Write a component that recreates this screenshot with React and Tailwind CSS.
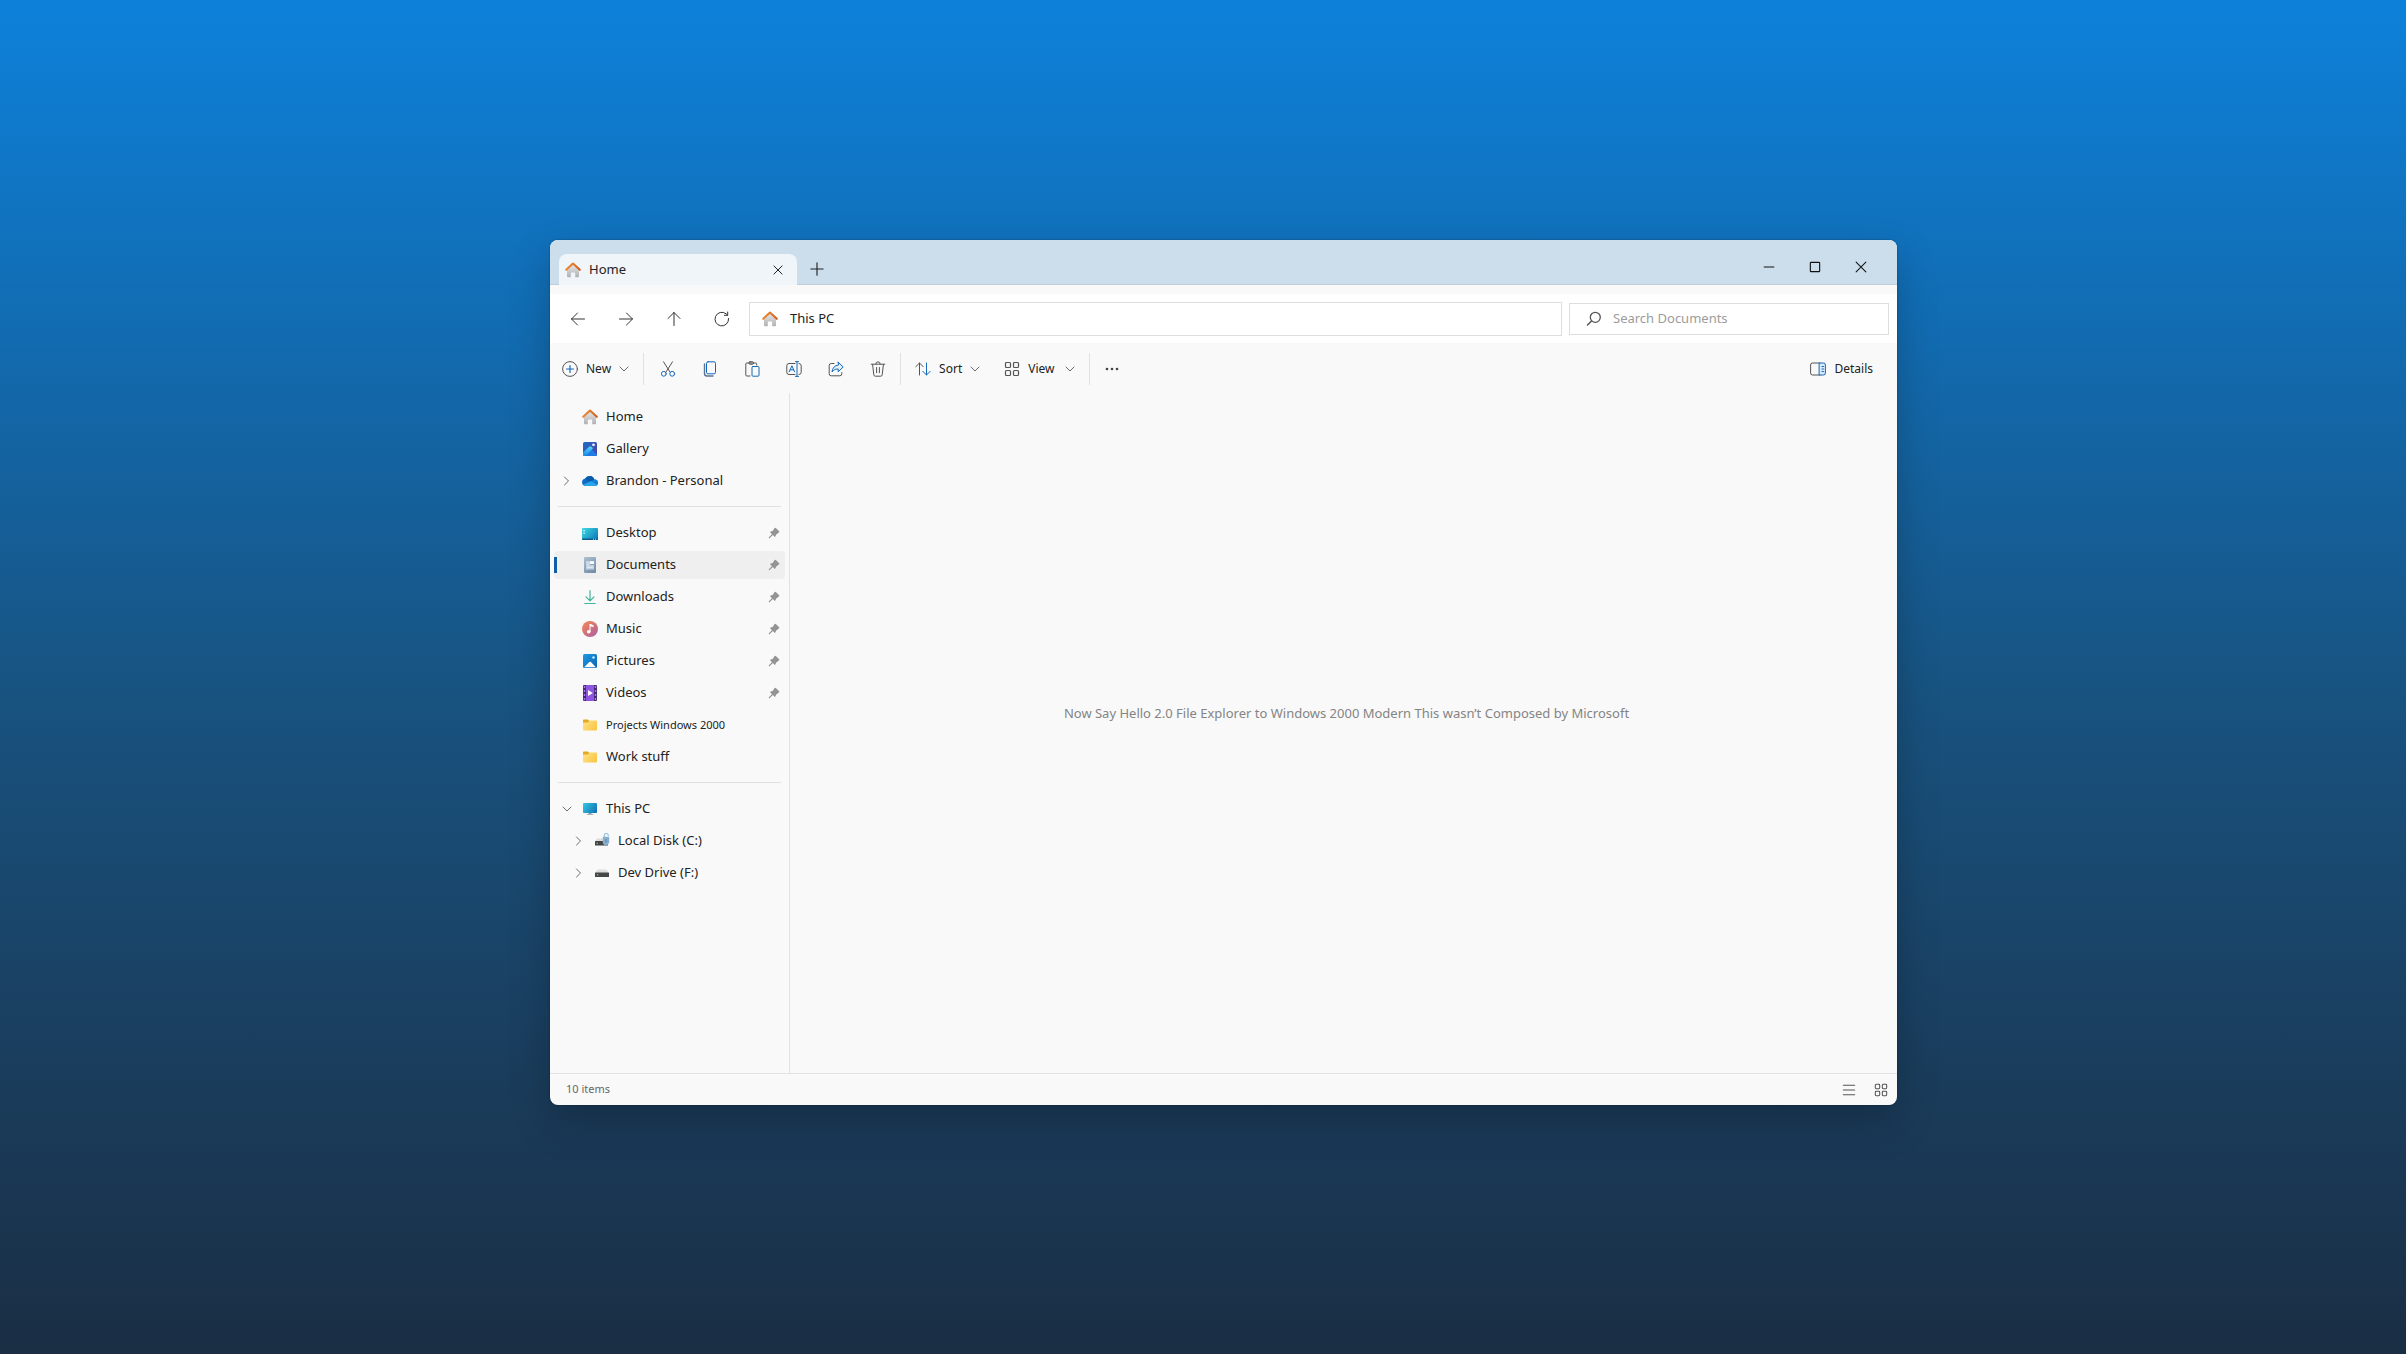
// App.jsx - File Explorer window on a desktop
import React, { useState } from 'react';

const HomeIcon = () => (
  <svg className="w-4 h-4 shrink-0" viewBox="0 0 16 16" fill="none">
    <defs>
      <linearGradient id="homeWall" x1="0" y1="5" x2="0" y2="16" gradientUnits="userSpaceOnUse">
        <stop stopColor="#dcdcdc" />
        <stop offset="1" stopColor="#adadb0" />
      </linearGradient>
      <linearGradient id="homeRoof" x1="0" y1="0" x2="16" y2="8" gradientUnits="userSpaceOnUse">
        <stop stopColor="#f0953a" />
        <stop offset="1" stopColor="#cf5a1c" />
      </linearGradient>
    </defs>
    <path d="M2 7.500 8 2.200 14 7.500v6.800a1 1 0 0 1-1 1h-2.800v-4.100a.8.8 0 0 0-.8-.8H6.600a.8.8 0 0 0-.8.8v4.100H3a1 1 0 0 1-1-1Z" fill="url(#homeWall)" />
    <path d="M1.200 7.800 8 1.500l6.800 6.300" stroke="url(#homeRoof)" strokeWidth="2.100" strokeLinecap="round" strokeLinejoin="round" />
  </svg>
);

const GalleryIcon = () => (
  <svg className="w-4 h-4 shrink-0" viewBox="0 0 16 16">
    <defs>
      <linearGradient id="galBack" x1="1" y1="1" x2="15" y2="12" gradientUnits="userSpaceOnUse">
        <stop stopColor="#1f6cc8" />
        <stop offset="1" stopColor="#4a43a8" />
      </linearGradient>
      <linearGradient id="galHill" x1="8" y1="5" x2="4" y2="15" gradientUnits="userSpaceOnUse">
        <stop stopColor="#55d4fb" />
        <stop offset="1" stopColor="#1b8fe6" />
      </linearGradient>
    </defs>
    <rect x="1" y="1" width="14" height="14" rx="1.500" fill="url(#galBack)" />
    <path d="M3 15 9 7.500 15 13.500A1.500 1.500 0 0 1 13.500 15Z" fill="#1f7ce6" />
    <path d="M1 11.500 7 5.700q1.300-1 2.500 0L11 7.200 3.500 15h-1A1.500 1.500 0 0 1 1 13.500Z" fill="url(#galHill)" />
    <circle cx="11.500" cy="3.800" r="1.400" fill="#e8f4ff" />
  </svg>
);

const CloudIcon = () => (
  <svg className="w-4 h-4 shrink-0" viewBox="0 0 16 16">
    <path d="M4 13A3.800 3.800 0 0 1 .1 9.200 3.700 3.700 0 0 1 3.200 5.500 5 5 0 0 1 12.300 6.400 3.400 3.400 0 0 1 15.900 9.800 3 3 0 0 1 13 13Z" fill="#0f6cc4" />
    <path d="M3.200 5.500A5 5 0 0 1 12.300 6.400L7 8.500Z" fill="#0a5cab" />
    <path d="M12.300 6.400a3.400 3.400 0 0 1 3.600 3.400L9 9Z" fill="#1583d8" />
    <path d="M1.200 11.600 8.800 8.200l6.700 3.300A3 3 0 0 1 13 13H4a3.800 3.800 0 0 1-2.800-1.400Z" fill="#2aa4ea" />
  </svg>
);

const DesktopIcon = () => (
  <svg className="w-4 h-4 shrink-0" viewBox="0 0 16 16">
    <defs>
      <linearGradient id="deskFill" x1="0" y1="3" x2="14" y2="16" gradientUnits="userSpaceOnUse">
        <stop stopColor="#3fdbe2" />
        <stop offset="1" stopColor="#0a78b8" />
      </linearGradient>
    </defs>
    <rect y="3" width="16" height="12" rx="1" fill="url(#deskFill)" />
    <path d="M0 13.500h16V14a1 1 0 0 1-1 1H1a1 1 0 0 1-1-1Z" fill="#0b5c8a" />
    <path d="M1.500 5h1.200v1.200H1.500ZM1.500 7.500h1.200v1.200H1.500ZM11 13.800h1v.8h-1ZM13 13.800h1v.8h-1Z" fill="#fff" />
  </svg>
);

const DocumentsIcon = () => (
  <svg className="w-4 h-4 shrink-0" viewBox="0 0 16 16">
    <defs>
      <linearGradient id="docFill" x1="2" y1="0" x2="14" y2="16" gradientUnits="userSpaceOnUse">
        <stop stopColor="#adc0d1" />
        <stop offset="1" stopColor="#7088a3" />
      </linearGradient>
    </defs>
    <rect x="2" width="12" height="16" rx="1" fill="url(#docFill)" />
    <path d="M4 4h4v4h4v4.500H4Z" fill="#c3d2e1" />
    <path d="M8 4.200h4V7H8Z" fill="#fff" />
    <path d="M5 6h1.500M5 8h1.500M5 10.300h6" stroke="#eef3f8" strokeWidth=".8" />
  </svg>
);

const DownloadsIcon = () => (
  <svg className="w-4 h-4 shrink-0" viewBox="0 0 16 16" fill="none" stroke="#3fb59b" strokeWidth="1.200" strokeLinecap="round" strokeLinejoin="round">
    <path d="M8 1.500v10M4 7.800l4 4 4-4" />
    <path d="M2.800 14.500h10.400" />
  </svg>
);

const MusicIcon = () => (
  <svg className="w-4 h-4 shrink-0" viewBox="0 0 16 16">
    <defs>
      <linearGradient id="musicFill" x1="2" y1="2" x2="14" y2="15" gradientUnits="userSpaceOnUse">
        <stop stopColor="#ee8458" />
        <stop offset="1" stopColor="#b1609f" />
      </linearGradient>
    </defs>
    <circle cx="8" cy="8" r="8" fill="url(#musicFill)" />
    <circle cx="6.700" cy="10.800" r="1.800" fill="#fff" />
    <path d="M7.500 3h1.200l2.800 1.300v2L8.500 5.200v5.800h-1Z" fill="#fff" />
  </svg>
);

const PicturesIcon = () => (
  <svg className="w-4 h-4 shrink-0" viewBox="0 0 16 16">
    <defs>
      <linearGradient id="picFill" x1="1" y1="1" x2="15" y2="15" gradientUnits="userSpaceOnUse">
        <stop stopColor="#1e9be4" />
        <stop offset="1" stopColor="#0a62b5" />
      </linearGradient>
    </defs>
    <rect x="1" y="1" width="14" height="14" rx="1.500" fill="url(#picFill)" />
    <path d="M2.200 14.300 7.300 9.100q.8-.7 1.600 0l5 5.200Z" fill="#fff" />
    <circle cx="11.500" cy="4.500" r="1.200" fill="#d9f1ff" />
  </svg>
);

const VideosIcon = () => (
  <svg className="w-4 h-4 shrink-0" viewBox="0 0 16 16">
    <rect x="1" width="14" height="16" rx="1" fill="#432c73" />
    <rect x="4" width="8" height="16" fill="#9055e0" />
    <path d="M1.800 1h1.400v2H1.800ZM1.800 5h1.400v2H1.800ZM1.800 9h1.400v2H1.800ZM1.800 13h1.400v2H1.800ZM12.800 1h1.400v2h-1.400ZM12.800 5h1.400v2h-1.400ZM12.800 9h1.400v2h-1.400ZM12.800 13h1.400v2h-1.400Z" fill="#a879ea" />
    <path d="M6 5v6l4.800-3Z" fill="#fff" />
  </svg>
);

const FolderIcon = () => (
  <svg className="w-4 h-4 shrink-0" viewBox="0 0 16 16">
    <defs>
      <linearGradient id="folderFill" x1="1" y1="4" x2="15" y2="14" gradientUnits="userSpaceOnUse">
        <stop stopColor="#ffe08a" />
        <stop offset="1" stopColor="#fac43a" />
      </linearGradient>
    </defs>
    <path d="M1 3.200a.8.800 0 0 1 .8-.8h4L7.500 4H14v4H1Z" fill="#e5a820" />
    <path d="M1 5.500h5L7.500 3.600h6.700a.8.800 0 0 1 .8.800v8.200a.8.800 0 0 1-.8.800H1.800a.8.800 0 0 1-.8-.8Z" fill="url(#folderFill)" />
  </svg>
);

const PcIcon = () => (
  <svg className="w-4 h-4 shrink-0" viewBox="0 0 16 16">
    <defs>
      <linearGradient id="pcFill" x1="1" y1="2" x2="15" y2="12" gradientUnits="userSpaceOnUse">
        <stop stopColor="#36cbe2" />
        <stop offset="1" stopColor="#0d6cb4" />
      </linearGradient>
    </defs>
    <path d="M6.500 11.500h3V13.500h-3Z" fill="#8297a8" />
    <path d="M4.800 13h6.400v1H4.800Z" fill="#a4b2bd" />
    <rect x="1" y="2" width="14" height="10" rx=".8" fill="url(#pcFill)" />
  </svg>
);

const LocalDiskIcon = () => (
  <svg className="w-4 h-4 shrink-0" viewBox="0 0 16 16">
    <path d="M3 5.500h7v3H1Z" fill="#dcdcdc" />
    <rect x="1" y="8" width="13" height="4.500" rx=".6" fill="#444" />
    <rect x="2.500" y="9.800" width="1.500" height="1" fill="#6fe08c" />
    <path d="M10.300 4V2.400a2 2 0 0 1 4 0v.8" fill="none" stroke="#7fb2d6" strokeWidth="1" />
    <path d="M8.800 3.800h6.400v6L13.500 12h-3L8.800 10.500Z" fill="#87b0cf" />
    <path d="M11.300 6h1.400v3.500h-1.400Z" fill="#5d8fb5" />
  </svg>
);

const DriveIcon = () => (
  <svg className="w-4 h-4 shrink-0" viewBox="0 0 16 16">
    <path d="M3.500 4.500h9L15 8H1Z" fill="#dedede" />
    <rect x="1" y="7.500" width="14" height="4.500" rx=".6" fill="#454545" />
    <rect x="2.800" y="9.300" width="1.500" height="1" fill="#7be495" />
  </svg>
);

const PinIcon = () => (
  <svg className="w-3 h-3 shrink-0" viewBox="0 0 12 12" fill="#949494" stroke="#949494" strokeLinecap="round" strokeLinejoin="round">
    <path d="M7.300 1.500 10.600 4.700 8.800 6.200 7.700 6.700 6.800 9 3 5.200 5.300 4.400 6 3.300Z" strokeWidth="1.500" />
    <path d="M4.500 7.500 1.300 10.700" strokeWidth="1.200" />
  </svg>
);

const Chevron = ({ down }) => (
  <svg className="w-[10px] h-[10px] shrink-0" viewBox="0 0 10 10" fill="none" stroke="#6a6a6a" strokeLinecap="round" strokeLinejoin="round">
    <path d={down ? 'M1 3l4 4 4-4' : 'M2.500 1l4 4-4 4'} />
  </svg>
);

const Line = ({ children, className = 'w-4 h-4', color = '#555' }) => (
  <svg className={`${className} shrink-0`} viewBox="0 0 16 16" fill="none" stroke={color} strokeLinecap="round" strokeLinejoin="round">
    {children}
  </svg>
);

const GridIcon = ({ className = 'w-4 h-4' }) => (
  <Line className={className}>
    <g strokeWidth="1.200">
      <rect x="1.500" y="1.500" width="5" height="5" rx="1" />
      <rect x="9.500" y="1.500" width="5" height="5" rx="1" />
      <rect x="1.500" y="9.500" width="5" height="5" rx="1" />
      <rect x="9.500" y="9.500" width="5" height="5" rx="1" />
    </g>
  </Line>
);

const BLUE = '#1668b8';

const navButtons = [
  { label: 'Back', icon: <path d="M14.500 8H1.500M7.500 2 1.500 8l6 6" /> },
  { label: 'Forward', icon: <path d="M1.500 8h13M8.500 2l6 6-6 6" /> },
  { label: 'Up', icon: <path d="M8 14.500v-13M2 7.500l6-6 6 6" /> },
  { label: 'Refresh', icon: <path d="M14.600 7.500a6.800 6.800 0 1 1-2.500-4.700L13.500 4M13.700 1v3.300h-3.300" /> },
];

const editButtons = [
  {
    label: 'Cut',
    icon: (
      <>
        <path d="M3.500.8 10 11M12.500.8 6 11" />
        <g stroke={BLUE}>
          <circle cx="3.800" cy="12.800" r="2.400" />
          <circle cx="12.200" cy="12.800" r="2.400" />
        </g>
      </>
    ),
  },
  {
    label: 'Copy',
    icon: (
      <>
        <path d="M2.500 3v9.500a2.500 2.500 0 0 0 2.500 2.500h6" stroke="#5b7592" strokeWidth="1.400" />
        <rect x="4.500" y=".8" width="9" height="12" rx="1.500" stroke={BLUE} />
      </>
    ),
  },
  {
    label: 'Paste',
    icon: (
      <>
        <path d="M6 15H2.800a1 1 0 0 1-1-1V3a1 1 0 0 1 1-1H5M9.500 2h2.200a1 1 0 0 1 1 1v1" />
        <rect x="5" y=".8" width="4.500" height="2.400" rx="1" fill="#a9a39c" />
        <rect x="8" y="5.500" width="7" height="9.700" rx="1" stroke={BLUE} />
      </>
    ),
  },
  {
    label: 'Rename',
    icon: (
      <>
        <path d="M9 2.500H3a2.200 2.200 0 0 0-2.200 2.200v6.600A2.200 2.200 0 0 0 3 13.500h6M13 2.500a2.200 2.200 0 0 1 2.200 2.200v6.600a2.200 2.200 0 0 1-2.200 2.200" />
        <path d="M11 .8v14.400M9.500.6h3M9.500 15.400h3M3.200 10.800 5.900 4.800 8.600 10.800M4.200 8.800h3.400" stroke={BLUE} />
      </>
    ),
  },
  {
    label: 'Share',
    icon: (
      <>
        <path d="M6 2.500H3.200A2 2 0 0 0 1.200 4.500v8.300a2 2 0 0 0 2 2h8.600a2 2 0 0 0 2-2v-1.300" />
        <path d="M10.200 1.200 15.200 6l-5 4.800V8C7.500 7.800 5.500 9 4 11c.3-3.800 2.500-6.600 6.200-7Z" stroke={BLUE} fill="#e3effa" />
      </>
    ),
  },
  {
    label: 'Delete',
    icon: <path d="M1.200 3.200h13.600M5.800 3a2.200 2.200 0 0 1 4.400 0M2.600 3.400l1.200 10.400a1.500 1.500 0 0 0 1.500 1.400h5.400a1.500 1.500 0 0 0 1.500-1.400l1.200-10.400M6.600 6.500v5.200M9.400 6.500v5.200" />,
  },
];

const topItems = [
  { label: 'Home', Icon: HomeIcon },
  { label: 'Gallery', Icon: GalleryIcon },
  { label: 'Brandon - Personal', Icon: CloudIcon, chevron: 'right' },
];

const pinnedItems = [
  { label: 'Desktop', Icon: DesktopIcon, pinned: true },
  { label: 'Documents', Icon: DocumentsIcon, pinned: true },
  { label: 'Downloads', Icon: DownloadsIcon, pinned: true },
  { label: 'Music', Icon: MusicIcon, pinned: true },
  { label: 'Pictures', Icon: PicturesIcon, pinned: true },
  { label: 'Videos', Icon: VideosIcon, pinned: true },
  { label: 'Projects Windows 2000', Icon: FolderIcon, small: true },
  { label: 'Work stuff', Icon: FolderIcon },
];

const driveItems = [
  { label: 'This PC', Icon: PcIcon, chevron: 'down' },
  { label: 'Local Disk (C:)', Icon: LocalDiskIcon, chevron: 'right', nested: true },
  { label: 'Dev Drive (F:)', Icon: DriveIcon, chevron: 'right', nested: true },
];

const SideItem = ({ item, active, onSelect }) => {
  const { label, Icon, chevron, pinned, small, nested } = item;
  return (
    <li>
      <button
        type="button"
        onClick={() => onSelect(label)}
        className={`relative flex items-center w-full h-7 pr-[5px] rounded-sm text-left ${nested ? 'pl-5' : 'pl-2'} ${active ? 'bg-[#efefef]' : ''}`}
      >
        {active && <span className="absolute left-0 top-1.5 w-[3px] h-4 bg-[#0f5ea8]" />}
        <span className="w-5 shrink-0">{chevron && <Chevron down={chevron === 'down'} />}</span>
        <Icon />
        <span className={`ml-2 flex-1 whitespace-nowrap ${small ? 'text-[11px]' : 'text-[13px]'}`}>{label}</span>
        {pinned && <PinIcon />}
      </button>
    </li>
  );
};

const Separator = () => <div className="w-px h-8 bg-[#e2e2e2]" />;

const App = () => {
  const [selected, setSelected] = useState('Documents');

  const renderItems = (items) => (
    <ul className="flex flex-col gap-1">
      {items.map((item) => (
        <SideItem key={item.label} item={item} active={selected === item.label} onSelect={setSelected} />
      ))}
    </ul>
  );

  return (
    <div className="min-h-screen flex flex-col pt-60 pb-[249px] pl-[550px] pr-[509px] bg-[linear-gradient(to_bottom,#0d81da,#126bb0_25%,#18527f_52%,#1a3f60_76%,#1a2e44)] font-['Noto_Sans','Open_Sans',sans-serif] text-[#222]">
      <div className="flex-1 flex flex-col rounded-lg overflow-hidden bg-[#f9f9f9] shadow-[0_16px_40px_rgba(0,0,0,0.22),0_0_2px_rgba(0,0,0,0.4)]">

        {/* TITLE BAR */}
        <header className="flex items-end h-[45px] pl-[9px] pr-[13px] bg-[#ccdeeb] border-b border-[#bccddb]">
          <div className="flex items-center w-[238px] h-[31px] pl-1.5 pr-[11px] -mb-px rounded-t-lg bg-[#f0f5fa]">
            <HomeIcon />
            <span className="ml-2 flex-1 text-[13px]">Home</span>
            <button type="button" aria-label="Close tab" className="w-4 h-4 flex items-center justify-center">
              <Line className="w-[10px] h-[10px]" color="#222"><path d="M1.500 1.500l13 13M14.500 1.500l-13 13" strokeWidth="1.600" /></Line>
            </button>
          </div>
          <button type="button" aria-label="New tab" className="w-10 h-[31px] flex items-center justify-center">
            <Line className="w-[14px] h-[14px]" color="#222"><path d="M8 1v14M1 8h14" strokeWidth="1.300" /></Line>
          </button>
          <div className="flex-1" />
          <div className="flex h-[35px]">
            <button type="button" aria-label="Minimize" className="w-[46px] flex items-center justify-center">
              <Line className="w-3 h-3" color="#111"><path d="M1.500 8h13" strokeWidth="1.400" /></Line>
            </button>
            <button type="button" aria-label="Maximize" className="w-[46px] flex items-center justify-center">
              <Line className="w-3 h-3" color="#111"><rect x="1.800" y="1.800" width="12.400" height="12.400" rx="1" strokeWidth="1.500" /></Line>
            </button>
            <button type="button" aria-label="Close" className="w-[46px] flex items-center justify-center">
              <Line className="w-3 h-3" color="#111"><path d="M1.500 1.500l13 13M14.500 1.500l-13 13" strokeWidth="1.400" /></Line>
            </button>
          </div>
        </header>

        {/* ADDRESS ROW */}
        <div className="flex items-center mt-[9px] h-[49px] pr-2 bg-white">
          <div className="flex items-center gap-4 pl-3">
            {navButtons.map(({ label, icon }) => (
              <button key={label} type="button" aria-label={label} className="w-8 h-8 flex items-center justify-center">
                <Line color="#333">{icon}</Line>
              </button>
            ))}
          </div>
          <button type="button" className="ml-[11px] flex-1 flex items-center h-[34px] pl-3 border border-[#dedede] text-left">
            <HomeIcon />
            <span className="ml-3 text-[13px]">This PC</span>
          </button>
          <div className="ml-[7px] flex items-center w-80 h-8 pl-4 border border-[#dedede]">
            <label htmlFor="search" aria-label="Search">
              <Line color="#555"><circle cx="9.300" cy="6.300" r="5" strokeWidth="1.300" /><path d="M5.500 10 1.500 14" strokeWidth="1.500" /></Line>
            </label>
            <input id="search" type="text" placeholder="Search Documents" className="ml-[11px] flex-1 min-w-0 bg-transparent text-[13px] placeholder:text-[#9c9c9c] outline-none" />
          </div>
        </div>

        {/* COMMAND BAR */}
        <div className="flex items-center h-[50px] pt-0.5 pl-3 pr-6 text-xs">
          <button type="button" className="flex items-center pr-3.5">
            <Line><circle cx="8" cy="8" r="7.400" /><path d="M8 4.500v7M4.500 8h7" stroke={BLUE} strokeWidth="1.200" /></Line>
            <span className="ml-2 mr-2">New</span>
            <Chevron down />
          </button>
          <Separator />
          <div className="flex items-center gap-[26px] pl-4 pr-3.5">
            {editButtons.map(({ label, icon }) => (
              <button key={label} type="button" aria-label={label}>
                <Line>{icon}</Line>
              </button>
            ))}
          </div>
          <Separator />
          <button type="button" className="flex items-center pl-3.5">
            <Line><path d="M4.500 14V2M.8 5.700 4.500 2l3.700 3.700" /><path d="M11.500 2v12M7.800 10.300l3.700 3.700 3.700-3.700" stroke={BLUE} /></Line>
            <span className="ml-2 mr-2">Sort</span>
            <Chevron down />
          </button>
          <button type="button" className="flex items-center pl-6 pr-3.5">
            <GridIcon />
            <span className="ml-2 mr-2.5">View</span>
            <Chevron down />
          </button>
          <Separator />
          <button type="button" aria-label="More" className="pl-3.5">
            <Line><g fill="#444" stroke="none"><circle cx="3" cy="8" r="1.300" /><circle cx="8" cy="8" r="1.300" /><circle cx="13" cy="8" r="1.300" /></g></Line>
          </button>
          <div className="flex-1" />
          <button type="button" className="flex items-center gap-2">
            <Line>
              <path d="M10 2H2.500A1.900 1.900 0 0 0 .6 4v8a1.900 1.900 0 0 0 1.900 2H10" />
              <path d="M9.500 2H13.500A1.900 1.900 0 0 1 15.400 4v8a1.900 1.900 0 0 1-1.900 2H9.500Z" stroke={BLUE} fill="#d8eafa" />
              <path d="M12 5.500h1.500M12 8h1.500M12 10.500h1.500" stroke={BLUE} />
            </Line>
            Details
          </button>
        </div>

        {/* BODY */}
        <div className="flex-1 flex">
          <nav className="w-60 px-1 pt-[10px] border-r border-[#e2e2e2]">
            {renderItems(topItems)}
            <hr className="mt-[11px] mb-3 mx-1 border-[#e0e0e0]" />
            {renderItems(pinnedItems)}
            <hr className="mt-[11px] mb-3 mx-1 border-[#e0e0e0]" />
            {renderItems(driveItems)}
          </nav>
          <main className="flex-1 flex justify-center pl-1.5 pt-[312px]">
            <p className="text-[13px] leading-4 text-[#848484]">Now Say Hello 2.0 File Explorer to Windows 2000 Modern This wasn’t Composed by Microsoft</p>
          </main>
        </div>

        {/* STATUS BAR */}
        <footer className="flex items-center h-8 pl-4 pr-[9px] border-t border-[#e2e2e2] text-[11px] text-[#666]">
          <span className="flex-1">10 items</span>
          <button type="button" aria-label="List view" className="mr-[18px]">
            <Line className="w-[14px] h-[14px]"><path d="M1.500 2.500h13M1.500 8h13M1.500 13.500h13" strokeWidth="1.200" /></Line>
          </button>
          <button type="button" aria-label="Tile view">
            <GridIcon className="w-[14px] h-[14px]" />
          </button>
        </footer>
      </div>
    </div>
  );
};

export default App;
